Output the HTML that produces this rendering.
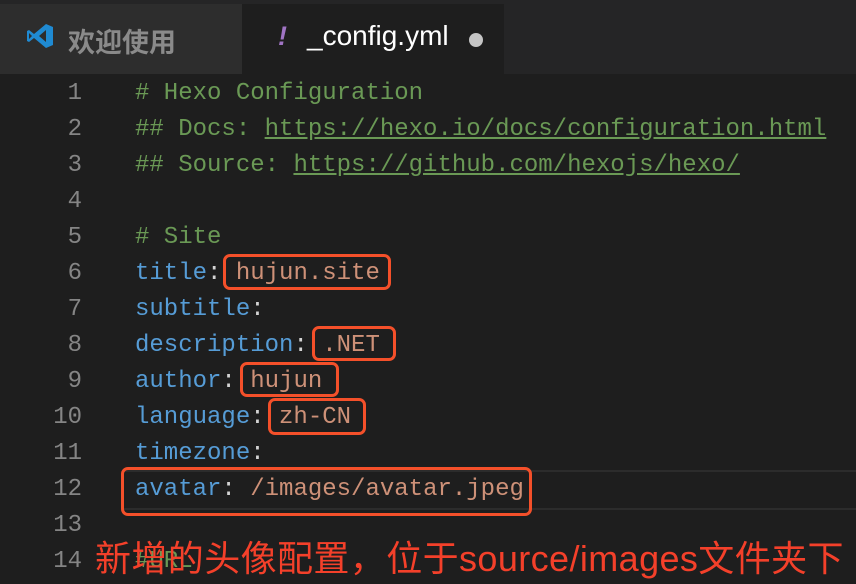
<!DOCTYPE html>
<html><head><meta charset="utf-8"><style>
*{margin:0;padding:0}
body{width:856px;height:584px;background:#1e1e1e;overflow:hidden;position:relative;font-family:"Liberation Mono","DejaVu Sans Mono",monospace}
.tabs{position:absolute;left:0;top:0;width:856px;height:74px;background:#252526}
.t1{position:absolute;left:0;top:4px;width:242px;height:70px;background:#2d2d2d}
.t2{position:absolute;left:242px;top:4px;width:262px;height:70px;background:#1e1e1e}
.tt{position:absolute;font-family:"Liberation Sans","Noto Sans CJK SC",sans-serif;font-size:27px;top:21px}
.ln{position:absolute;left:0;width:82px;text-align:right;color:#858585;font-size:24px;line-height:36px}
.cd{position:absolute;left:135px;font-size:24px;line-height:36px;white-space:pre;color:#d4d4d4}
.c{color:#6a9955}.u{text-decoration:underline}.k{color:#569cd6}.v{color:#ce9178}
.box{position:absolute;border:3px solid #f4502a;border-radius:7px}
</style></head><body>
<div class="tabs"></div>
<div class="t1"></div><div class="t2"></div>
<svg style="position:absolute;left:26px;top:22px" width="28" height="28" viewBox="0 0 28 28"><path d="M20 2 L27 5 V23 L20 26 L8 16 L3 20 L1 19 V9 L3 8 L8 12 Z M20 8 L13 14 L20 20 Z M3 11 V17 L6 14 Z" fill="#1f8ad2" fill-rule="evenodd"/></svg>
<div class="tt" style="left:68px;color:#8a8a8a;font-weight:bold">欢迎使用</div>
<div class="tt" style="left:278px;color:#a074c4;font-style:italic;font-weight:bold">!</div>
<div class="tt" style="left:307px;color:#fff;font-size:28px;top:20px">_config.yml</div>
<div style="position:absolute;left:469px;top:33px;width:14px;height:14px;border-radius:50%;background:#c5c5c5"></div>
<div style="position:absolute;left:122px;top:470px;width:734px;height:36px;border-top:2px solid #2c2c2c;border-bottom:2px solid #2c2c2c"></div>
<div class="ln" style="top:76px">1<br>2<br>3<br>4<br>5<br>6<br>7<br>8<br>9<br>10<br>11<br>12<br>13<br>14</div>
<div class="cd" style="top:76px"><span class="c"># Hexo Configuration</span>
<span class="c">## Docs: <span class="u">https://hexo.io/docs/configuration.html</span></span>
<span class="c">## Source: <span class="u">https://github.com/hexojs/hexo/</span></span>

<span class="c"># Site</span>
<span class="k">title</span>: <span class="v">hujun.site</span>
<span class="k">subtitle</span>:
<span class="k">description</span>: <span class="v">.NET</span>
<span class="k">author</span>: <span class="v">hujun</span>
<span class="k">language</span>: <span class="v">zh-CN</span>
<span class="k">timezone</span>:
<span class="k">avatar</span>: <span class="v">/images/avatar.jpeg</span>

<span class="c">#URL</span></div>
<div class="box" style="left:223px;top:254px;width:162px;height:30px"></div>
<div class="box" style="left:312px;top:326px;width:78px;height:29px"></div>
<div class="box" style="left:240px;top:362px;width:93px;height:29px"></div>
<div class="box" style="left:268px;top:398px;width:92px;height:31px"></div>
<div class="box" style="left:121px;top:467px;width:405px;height:43px"></div>
<div style="position:absolute;left:95px;top:530px;color:#f4402a;font-family:'Liberation Sans','Noto Sans CJK SC',sans-serif;font-size:36px;white-space:nowrap;letter-spacing:0.4px">新增的头像配置，位于source/images文件夹下</div>
</body></html>
